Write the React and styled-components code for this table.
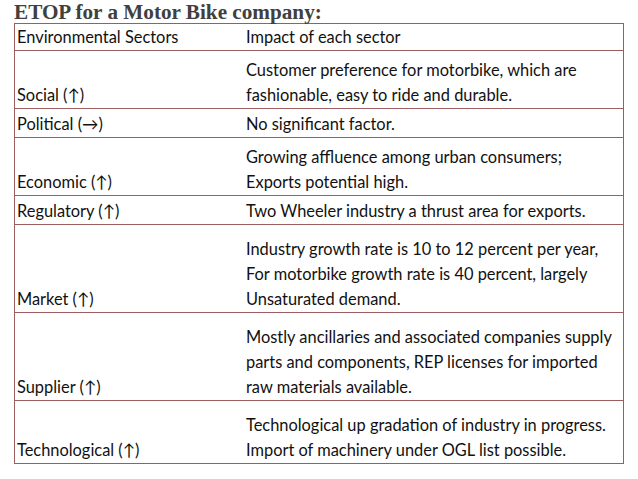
import styled, { createGlobalStyle } from 'styled-components';

const ROWS = [
  {
    sector: 'Social (↑)',
    impact: ['Customer preference for motorbike, which are', 'fashionable, easy to ride and durable.'],
    top: 6,
  },
  { sector: 'Political (→)', impact: ['No significant factor.'], top: 2 },
  {
    sector: 'Economic (↑)',
    impact: ['Growing affluence among urban consumers;', 'Exports potential high.'],
    top: 6,
  },
  {
    sector: 'Regulatory (↑)',
    impact: ['Two Wheeler industry a thrust area for exports.'],
    top: 2,
  },
  {
    sector: 'Market (↑)',
    impact: [
      'Industry growth rate is 10 to 12 percent per year,',
      'For motorbike growth rate is 40 percent, largely',
      'Unsaturated demand.',
    ],
    top: 11,
  },
  {
    sector: 'Supplier (↑)',
    impact: [
      'Mostly ancillaries and associated companies supply',
      'parts and components, REP licenses for imported',
      'raw materials available.',
    ],
    top: 11,
  },
  {
    sector: 'Technological (↑)',
    impact: [
      'Technological up gradation of industry in progress.',
      'Import of machinery under OGL list possible.',
    ],
    top: 11,
  },
];

const GlobalStyle = createGlobalStyle`
  body {
    margin: 0;
    background: #fff;
  }
`;

const Page = styled.div`
  width: 638px;
  height: 479px;
  padding: 1px 14px 0;
  box-sizing: border-box;
  overflow: hidden;
`;

const Title = styled.h1`
  margin: 0;
  font-family: 'Liberation Serif', serif;
  font-weight: 700;
  font-size: 21.2px;
  line-height: 22px;
  color: #404040;
`;

const Table = styled.div`
  width: 608px;
  border: 1px solid #9c5c60;
  border-bottom: none;
  font-family: Lato, 'Liberation Sans', sans-serif;
  font-size: 16.4px;
  line-height: 25px;
  color: #111;
`;

const Row = styled.div`
  display: grid;
  grid-template-columns: 229px 1fr;
  align-items: end;
  padding: ${({ $top }) => $top}px 0 1px 2px;
  border-bottom: 1px solid #9c5c60;
`;

const Cell = styled.div`
  white-space: nowrap;
`;

const Line = styled.div``;

const App = () => (
  <Page>
    <GlobalStyle />
    <Title>ETOP for a Motor Bike company:</Title>
    <Table>
      <Row $top={0}>
        <Cell>Environmental Sectors</Cell>
        <Cell>Impact of each sector</Cell>
      </Row>
      {ROWS.map((row) => (
        <Row key={row.sector} $top={row.top}>
          <Cell>{row.sector}</Cell>
          <Cell>
            {row.impact.map((line) => (
              <Line key={line}>{line}</Line>
            ))}
          </Cell>
        </Row>
      ))}
    </Table>
  </Page>
);

export default App;
